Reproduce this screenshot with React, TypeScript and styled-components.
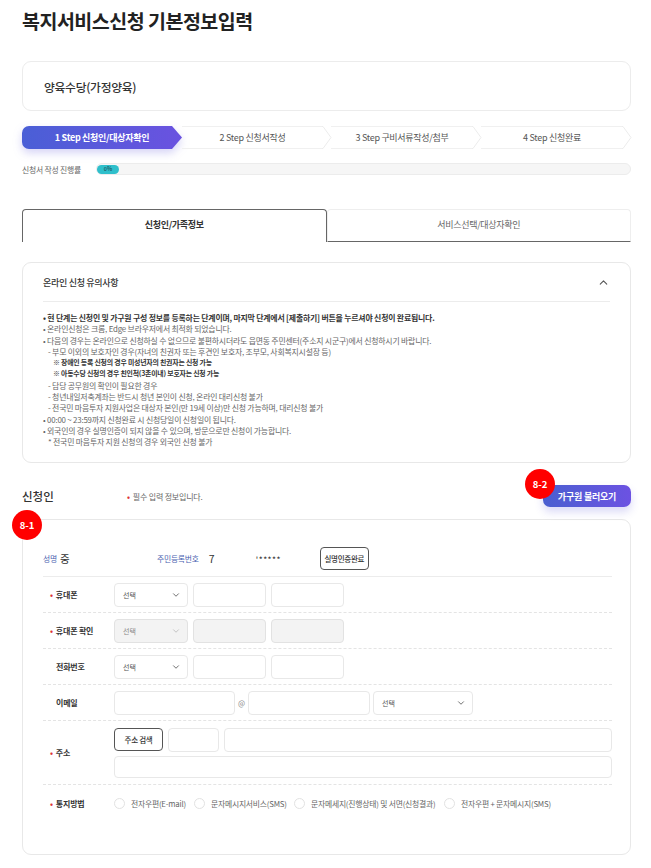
import { FC } from 'react'
import styled, { createGlobalStyle } from 'styled-components'
import { ChevronDown, ChevronUp } from 'lucide-react'

const GlobalStyle = createGlobalStyle`
  html, body {
    margin: 0;
    padding: 0;
    background: #fff;
  }
  body {
    font-family: "Noto Sans CJK KR", "Noto Sans", sans-serif;
    color: #222;
  }
  * {
    box-sizing: border-box;
  }
`

const Page = styled.div`
  width: 651px;
  height: 868px;
  padding: 9px 20px 0 22px;
  overflow: hidden;
`

const Title = styled.h1`
  margin: 0 0 29px;
  height: 23px;
  font-size: 19.5px;
  line-height: 23px;
  font-weight: 700;
  letter-spacing: -0.5px;
  color: #222;
`

const ServiceCard = styled.div`
  height: 50px;
  padding: 0 21px;
  display: flex;
  align-items: center;
  border: 1px solid #ececec;
  border-radius: 9px;
  font-size: 11.8px;
  font-weight: 500;
  color: #333;
  letter-spacing: -0.3px;
`

const Steps = styled.div`
  display: flex;
  margin-top: 15px;
  height: 23px;
`

const Step = styled.div<{ $active?: boolean; $width: number }>`
  position: relative;
  width: ${(p) => p.$width}px;
  display: flex;
  align-items: center;
  justify-content: center;
  padding-right: ${(p) => (p.$active ? 0 : 8)}px;
  font-size: 9px;
  letter-spacing: -0.3px;
  font-weight: ${(p) => (p.$active ? 700 : 400)};
  color: ${(p) => (p.$active ? '#fff' : '#555')};
  border-top: ${(p) => (p.$active ? '0' : '1px solid #f0f0f0')};
  border-bottom: ${(p) => (p.$active ? '0' : '1px solid #f0f0f0')};
`

const ActiveShape = styled.div`
  position: absolute;
  inset: 0;
  border-radius: 7px 0 0 7px;
  background: linear-gradient(90deg, #4a5fd6, #6a52e0);
  clip-path: polygon(0 0, calc(100% - 10px) 0, 100% 50%, calc(100% - 10px) 100%, 0 100%);
`

const ActiveGlow = styled.div`
  position: absolute;
  inset: 0;
  filter: drop-shadow(0 4px 4px rgba(90, 85, 220, 0.25));
`

const StepLabel = styled.span`
  position: relative;
`

const StepArrow = styled.svg`
  position: absolute;
  right: -1px;
  top: -1px;
  width: 10px;
  height: 23px;
  background: #fff;
`

const ProgressRow = styled.div`
  display: flex;
  align-items: center;
  margin-top: 14px;
  height: 12px;
`

const ProgressLabel = styled.div`
  width: 74px;
  font-size: 7.8px;
  color: #666;
  letter-spacing: -0.2px;
  white-space: nowrap;
`

const ProgressTrack = styled.div`
  flex: 1;
  height: 12px;
  border: 1px solid #ececec;
  border-radius: 6px;
  background: #f6f6f6;
  display: flex;
  align-items: center;
`

const ProgressFill = styled.div`
  width: 22px;
  height: 9px;
  border-radius: 5px;
  background: #2fbfcb;
  font-size: 5.5px;
  line-height: 9px;
  text-align: center;
  color: #1c4f57;
  font-weight: 500;
`

const Tabs = styled.div`
  display: flex;
  margin-top: 34px;
  height: 33px;
`

const Tab = styled.div<{ $active?: boolean }>`
  flex: 1;
  display: flex;
  align-items: center;
  justify-content: center;
  padding-bottom: 3px;
  font-size: 9px;
  letter-spacing: -0.3px;
  font-weight: ${(p) => (p.$active ? 700 : 400)};
  color: ${(p) => (p.$active ? '#333' : '#666')};
  border-radius: 4px 4px 0 0;
  border: 1px solid ${(p) => (p.$active ? '#666' : '#eee')};
  border-bottom: ${(p) => (p.$active ? '0' : '1px solid #666')};
`

const NoticeCard = styled.div`
  margin-top: 20px;
  height: 201px;
  padding: 0 20px;
  border: 1px solid #e8e8e8;
  border-radius: 9px;
`

const NoticeHead = styled.div`
  height: 39px;
  display: flex;
  align-items: center;
  justify-content: space-between;
  border-bottom: 1px solid #ececec;
  font-size: 9px;
  font-weight: 500;
  color: #333;
  letter-spacing: -0.3px;
`

const NoticeBody = styled.div`
  margin-top: 10px;
`

const NoticeLine = styled.div<{ $indent?: number; $bold?: boolean; $small?: boolean }>`
  height: 11.3px;
  line-height: 11.3px;
  padding-left: ${(p) => p.$indent ?? 0}px;
  font-size: ${(p) => (p.$small ? 6.9 : 7.9)}px;
  letter-spacing: -0.2px;
  white-space: nowrap;
  font-weight: ${(p) => (p.$bold ? 700 : 400)};
  color: ${(p) => (p.$bold ? '#333' : '#666')};
`

const ApplicantHead = styled.div`
  position: relative;
  height: 56px;
  padding-top: 10px;
  display: flex;
  align-items: center;
`

const ApplicantTitle = styled.div`
  width: 105px;
  font-size: 11.5px;
  font-weight: 500;
  color: #333;
`

const RequiredNote = styled.div`
  font-size: 8px;
  color: #666;
  letter-spacing: -0.2px;
`

const Dot = styled.span`
  color: #d33;
  font-weight: 700;
  margin-right: 3px;
`

const LoadButton = styled.button`
  position: absolute;
  right: 0;
  top: 22px;
  width: 88px;
  height: 22px;
  border: 0;
  border-radius: 7px;
  background: linear-gradient(90deg, #4a5fd0, #6c52e2);
  box-shadow: 0 5px 8px rgba(90, 85, 220, 0.22);
  color: #fff;
  font-family: inherit;
  font-size: 9px;
  font-weight: 700;
  letter-spacing: -0.2px;
  padding: 0;
`

const Badge = styled.div<{ $left: number; $top: number }>`
  position: absolute;
  left: ${(p) => p.$left}px;
  top: ${(p) => p.$top}px;
  width: 30px;
  height: 30px;
  border-radius: 50%;
  background: #f00;
  color: #fff;
  display: flex;
  align-items: center;
  justify-content: center;
  font-size: 9.5px;
  font-weight: 700;
  z-index: 2;
`

const FormCard = styled.div`
  height: 336px;
  padding: 21px 18px 0 20px;
  border: 1px solid #e8e8e8;
  border-radius: 9px;
`

const IdentityRow = styled.div`
  height: 36px;
  display: flex;
  align-items: center;
  border-bottom: 1px solid #ececec;
`

const IdLabel = styled.span`
  font-size: 7.8px;
  color: #4a5fb0;
  letter-spacing: -0.2px;
`

const IdValue = styled.span<{ $width: number; $inset: number }>`
  width: ${(p) => p.$width}px;
  padding-left: ${(p) => p.$inset}px;
  font-size: 10.5px;
  color: #333;
`

const Masked = styled.span`
  width: 64px;
  font-size: 8.5px;
  color: #333;
  letter-spacing: 0.5px;
`

const OutlineButton = styled.button<{ $width: number; $height: number }>`
  width: ${(p) => p.$width}px;
  height: ${(p) => p.$height}px;
  flex: none;
  padding: 0;
  border: 1px solid #555;
  border-radius: 4px;
  background: #fff;
  color: #333;
  font-family: inherit;
  font-size: 7.5px;
  font-weight: 500;
  letter-spacing: -0.3px;
`

const Row = styled.div<{ $height: number; $last?: boolean }>`
  height: ${(p) => p.$height}px;
  display: flex;
  align-items: center;
  border-bottom: ${(p) => (p.$last ? '0' : '1px dashed #e4e4e4')};
`

const Label = styled.div`
  width: 71px;
  flex: none;
  padding-left: 7px;
  font-size: 8px;
  font-weight: 700;
  color: #333;
  letter-spacing: -0.2px;
`

const Spacer = styled.span`
  display: inline-block;
  width: 6px;
`

const Fields = styled.div<{ $gap?: number }>`
  display: flex;
  align-items: center;
  gap: ${(p) => p.$gap ?? 5}px;
  flex: 1;
`

const FieldStack = styled.div`
  display: flex;
  flex-direction: column;
  gap: 4px;
  flex: 1;
`

const Input = styled.div<{ $width?: number; $disabled?: boolean; $height?: number }>`
  width: ${(p) => (p.$width ? `${p.$width}px` : 'auto')};
  flex: ${(p) => (p.$width ? 'none' : '1 1 auto')};
  height: ${(p) => p.$height ?? 24}px;
  border: 1px solid ${(p) => (p.$disabled ? '#e2e2e2' : '#e8e8e8')};
  border-radius: 4px;
  background: ${(p) => (p.$disabled ? '#f3f3f3' : '#fff')};
`

const AddressLine = styled(Input)`
  flex: none;
`

const SelectBox = styled(Input)`
  display: flex;
  align-items: center;
  justify-content: space-between;
  padding: 0 6px 0 8px;
  font-size: 7px;
  color: ${(p) => (p.$disabled ? '#888' : '#555')};
`

const At = styled.span`
  width: 7px;
  font-size: 7.5px;
  color: #888;
`

const Radios = styled.div`
  display: flex;
  align-items: center;
  flex: 1;
`

const RadioItem = styled.div<{ $width: number }>`
  width: ${(p) => p.$width}px;
  display: flex;
  align-items: center;
  gap: 6px;
  font-size: 7.8px;
  color: #666;
  letter-spacing: -0.2px;
  white-space: nowrap;
`

const RadioCircle = styled.span`
  width: 11px;
  height: 11px;
  flex: none;
  border: 1px solid #e2e2e2;
  border-radius: 50%;
`

const notices = [
  { text: '•  현 단계는 신청인 및 가구원 구성 정보를 등록하는 단계이며, 마지막 단계에서 [제출하기] 버튼을 누르셔야 신청이 완료됩니다.', bold: true },
  { text: '•  온라인신청은 크롬, Edge 브라우저에서 최적화 되었습니다.' },
  { text: '•  다음의 경우는 온라인으로 신청하실 수 없으므로 불편하시더라도 읍면동 주민센터(주소지 시군구)에서 신청하시기 바랍니다.' },
  { text: '- 부모 이외의 보호자인 경우(자녀의 친권자 또는 후견인 보호자, 조부모, 사회복지시설장 등)', indent: 5 },
  { text: '※ 장애인 등록 신청의 경우 미성년자의 친권자는 신청 가능', indent: 10, bold: true, small: true },
  { text: '※ 아동수당 신청의 경우 친인척(3촌이내) 보호자는 신청 가능', indent: 10, bold: true, small: true },
  { text: '- 담당 공무원의 확인이 필요한 경우', indent: 5 },
  { text: '- 청년내일저축계좌는 반드시 청년 본인이 신청, 온라인 대리신청 불가', indent: 5 },
  { text: '- 전국민 마음투자 지원사업은 대상자 본인(만 19세 이상)만 신청 가능하며, 대리신청 불가', indent: 5 },
  { text: '•  00:00 ~ 23:59까지 신청완료 시 신청당일이 신청일이 됩니다.' },
  { text: '•  외국인의 경우 실명인증이 되지 않을 수 있으며, 방문으로만 신청이 가능합니다.' },
  { text: '* 전국민 마음투자 지원 신청의 경우 외국인 신청 불가', indent: 5 }
]

const Arrow: FC = () => (
  <StepArrow viewBox="0 0 10 23">
    <path d="M0 0.5 L1 0.5 L9 11.5 L1 22.5 L0 22.5" fill="none" stroke="#ececec" strokeWidth="1" />
  </StepArrow>
)

const Select: FC<{ width: number; disabled?: boolean }> = ({ width, disabled }) => (
  <SelectBox $width={width} $disabled={disabled}>
    선택
    <ChevronDown size={10} color={disabled ? '#bbb' : '#555'} strokeWidth={2} />
  </SelectBox>
)

const PhoneFields: FC<{ disabled?: boolean }> = ({ disabled }) => (
  <Fields>
    <Select width={74} disabled={disabled} />
    <Input $width={73} $disabled={disabled} />
    <Input $width={73} $disabled={disabled} />
  </Fields>
)

export default function App() {
  return (
    <Page>
      <GlobalStyle />
      <Title>복지서비스신청 기본정보입력</Title>
      <ServiceCard>양육수당(가정양육)</ServiceCard>

      <Steps>
        <Step $active $width={160}>
          <ActiveGlow>
            <ActiveShape />
          </ActiveGlow>
          <StepLabel>1 Step 신청인/대상자확인</StepLabel>
        </Step>
        <Step $width={149}>
          2 Step 신청서작성
          <Arrow />
        </Step>
        <Step $width={150}>
          3 Step 구비서류작성/첨부
          <Arrow />
        </Step>
        <Step $width={150}>
          4 Step 신청완료
          <Arrow />
        </Step>
      </Steps>

      <ProgressRow>
        <ProgressLabel>신청서 작성 진행률</ProgressLabel>
        <ProgressTrack>
          <ProgressFill>0%</ProgressFill>
        </ProgressTrack>
      </ProgressRow>

      <Tabs>
        <Tab $active>신청인/가족정보</Tab>
        <Tab>서비스선택/대상자확인</Tab>
      </Tabs>

      <NoticeCard>
        <NoticeHead>
          온라인 신청 유의사항
          <ChevronUp size={13} color="#555" strokeWidth={2} />
        </NoticeHead>
        <NoticeBody>
          {notices.map((n) => (
            <NoticeLine key={n.text} $indent={n.indent} $bold={n.bold} $small={n.small}>
              {n.text}
            </NoticeLine>
          ))}
        </NoticeBody>
      </NoticeCard>

      <ApplicantHead>
        <ApplicantTitle>신청인</ApplicantTitle>
        <RequiredNote>
          <Dot>•</Dot>필수 입력 정보입니다.
        </RequiredNote>
        <LoadButton>가구원 불러오기</LoadButton>
        <Badge $left={503} $top={6}>8-2</Badge>
        <Badge $left={-10} $top={47}>8-1</Badge>
      </ApplicantHead>

      <FormCard>
        <IdentityRow>
          <IdLabel>성명</IdLabel>
          <IdValue $width={100} $inset={3}>중</IdValue>
          <IdLabel>주민등록번호</IdLabel>
          <IdValue $width={57} $inset={10}>7</IdValue>
          <Masked>'*****</Masked>
          <OutlineButton $width={49} $height={23}>실명인증완료</OutlineButton>
        </IdentityRow>
        <Row $height={36}>
          <Label><Dot>•</Dot>휴대폰</Label>
          <PhoneFields />
        </Row>
        <Row $height={36}>
          <Label><Dot>•</Dot>휴대폰 확인</Label>
          <PhoneFields disabled />
        </Row>
        <Row $height={36}>
          <Label><Spacer />전화번호</Label>
          <PhoneFields />
        </Row>
        <Row $height={36}>
          <Label><Spacer />이메일</Label>
          <Fields $gap={3}>
            <Input $width={121} />
            <At>@</At>
            <Input $width={122} />
            <Select width={100} />
          </Fields>
        </Row>
        <Row $height={64}>
          <Label><Dot>•</Dot>주소</Label>
          <FieldStack>
            <Fields>
              <OutlineButton $width={49} $height={23}>주소 검색</OutlineButton>
              <Input $width={51} />
              <Input />
            </Fields>
            <AddressLine $height={22} />
          </FieldStack>
        </Row>
        <Row $height={36} $last>
          <Label><Dot>•</Dot>통지방법</Label>
          <Radios>
            <RadioItem $width={80}><RadioCircle />전자우편(E-mail)</RadioItem>
            <RadioItem $width={100}><RadioCircle />문자메시지서비스(SMS)</RadioItem>
            <RadioItem $width={150}><RadioCircle />문자메세지(진행상태) 및 서면(신청결과)</RadioItem>
            <RadioItem $width={120}><RadioCircle />전자우편 + 문자메시지(SMS)</RadioItem>
          </Radios>
        </Row>
      </FormCard>
    </Page>
  )
}
